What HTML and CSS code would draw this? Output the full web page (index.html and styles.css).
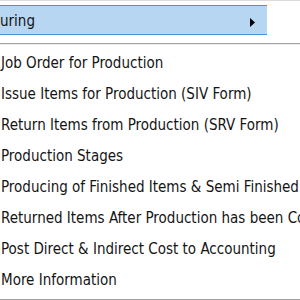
FILE: index.html
```html
<!DOCTYPE html>
<html>
<head>
<meta charset="utf-8">
<link rel="stylesheet" href="styles.css">
</head>
<body>
<div class="topbar">
  <div class="hl">
    <span class="hl-text">uring</span>
    <svg class="arrow" width="5" height="9" viewBox="0 0 5 9"><path d="M0 0 L5 4.5 L0 9 Z" fill="#000"/></svg>
  </div>
</div>
<ul class="menu">
  <li>Job Order for Production</li>
  <li>Issue Items for Production (SIV Form)</li>
  <li>Return Items from Production (SRV Form)</li>
  <li>Production Stages</li>
  <li>Producing of Finished Items &amp; Semi Finished Items</li>
  <li>Returned Items After Production has been Completed</li>
  <li>Post Direct &amp; Indirect Cost to Accounting</li>
  <li>More Information</li>
</ul>
</body>
</html>
```

FILE: styles.css
```css
html, body {
  margin: 0;
  padding: 0;
  width: 300px;
  height: 300px;
  overflow: hidden;
  background: #fff;
  font-family: "DejaVu Sans Condensed", "DejaVu Sans", sans-serif;
  font-size: 15px;
  color: #141414;
}
.topbar {
  height: 43px;
  box-sizing: border-box;
  padding-top: 5px;
  border-top: 1px solid #dcdcdc;
  width: 300px;
}
.hl {
  width: 267px;
  height: 30px;
  box-sizing: border-box;
  margin-top: -1px;
  border-top: 1px solid #4a90dc;
  border-bottom: 1px solid #4a90dc;
  background: #b7d6f2;
  display: flex;
  align-items: center;
  justify-content: space-between;
  padding: 2px 12px 0 0;
}
.hl-text {
  margin-left: 0;
}
.arrow {
  display: block;
  margin-top: 2px;
}
.menu {
  list-style: none;
  margin: 0;
  padding: 4px 0 3px;
  border-top: 1px solid #a3a3a3;
  border-bottom: 1px solid #a3a3a3;
  box-shadow: inset 0 1px 0 #ececec;
  white-space: nowrap;
}
.menu li {
  height: 31px;
  line-height: 31px;
  padding-left: 1px;
  overflow: hidden;
  text-overflow: clip;
}
```
